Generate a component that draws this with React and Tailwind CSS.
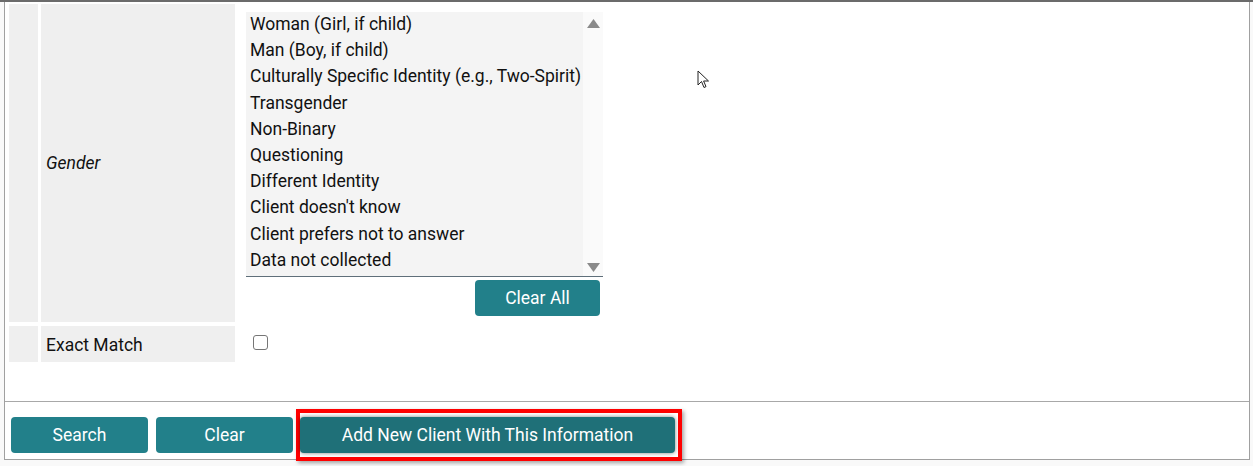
import React from "react";

const genders = [
  "Woman (Girl, if child)",
  "Man (Boy, if child)",
  "Culturally Specific Identity (e.g., Two-Spirit)",
  "Transgender",
  "Non-Binary",
  "Questioning",
  "Different Identity",
  "Client doesn't know",
  "Client prefers not to answer",
  "Data not collected",
];

export default function App() {
  return (
    <div
      className="relative h-[466px] w-[1253px] overflow-hidden bg-[#f9f9f9] text-[17.5px] text-[#111]"
      style={{ fontFamily: "Roboto, 'Liberation Sans', sans-serif" }}
    >
      <div className="h-[2px] bg-[#6b6b6b]" />
      <div className="ml-[4px] mr-[3px] flex h-[458px] flex-col border-x border-b border-[#a0a0a0] bg-white">
        {/* Form rows */}
        <div className="flex h-[399px] shrink-0 flex-col gap-[4px] pl-[4px] pt-[2px]">
          <div className="flex h-[318px] gap-[3px]">
            <div className="w-[29px] bg-[#efefef]" />
            <div className="flex w-[194px] items-center bg-[#efefef] pl-[5px] italic">
              Gender
            </div>
            <div className="flex flex-col pl-[8px] pt-[8px]">
              <div className="relative flex h-[265px] w-[357px] border-b border-[#5f6f7a] bg-[#f4f4f4]">
                <div className="-mt-[1px] flex flex-col pl-[4px] leading-[26.2px]">
                  {genders.map((g) => (
                    <div key={g} className="whitespace-nowrap">
                      {g}
                    </div>
                  ))}
                </div>
                <div className="absolute right-0 top-0 flex h-full w-[20px] flex-col items-center justify-between bg-[#fafafa] pb-[4px] pt-[7px]">
                  <svg width="13" height="9" viewBox="0 0 13 9">
                    <path d="M6.5 0 L13 9 L0 9 Z" fill="#8a8a8a" />
                  </svg>
                  <svg width="13" height="9" viewBox="0 0 13 9">
                    <path d="M0 0 L13 0 L6.5 9 Z" fill="#8a8a8a" />
                  </svg>
                </div>
              </div>
              <div className="mt-[3px] flex justify-end pr-[3px]">
                <button className="h-[36px] w-[125px] rounded-[4px] bg-[#22808a] text-white">
                  Clear All
                </button>
              </div>
            </div>
          </div>
          <div className="flex h-[36px] gap-[3px]">
            <div className="w-[29px] bg-[#efefef]" />
            <div className="flex w-[194px] items-center bg-[#efefef] pl-[5px] pt-[2px]">
              Exact Match
            </div>
            <div className="pl-[15px] pt-[9px]">
              <div className="h-[15px] w-[15px] rounded-[3px] border border-[#767676] bg-white" />
            </div>
          </div>
        </div>
        <div className="h-px shrink-0 bg-[#a8a8a8]" />
        {/* Actions */}
        <div className="flex h-[56px] shrink-0 items-start gap-[8px] pl-[6px] pt-[7px]">
          <button className="mt-[8px] h-[36px] w-[137px] rounded-[4px] bg-[#22808a] text-white">
            Search
          </button>
          <button className="mt-[8px] h-[36px] w-[137px] rounded-[4px] bg-[#22808a] text-white">
            Clear
          </button>
          <div className="-ml-[5px] border-4 border-[#ff0000] pb-[4px] pr-[3px] pt-[4px] shadow-[2px_2px_4px_rgba(0,0,0,0.35)]">
            <button className="h-[36px] w-[375px] rounded-[4px] bg-[#1f7078] text-white shadow-[0_0_4px_rgba(0,0,0,0.5)]">
              Add New Client With This Information
            </button>
          </div>
        </div>
      </div>
      {/* mouse cursor */}
      <svg
        className="absolute left-[697px] top-[70px]"
        width="14"
        height="20"
        viewBox="0 0 14 20"
      >
        <path
          d="M1 1 L1 15 L4.5 11.5 L7 17.5 L9 16.6 L6.6 11 L11.5 11 Z"
          fill="white"
          stroke="#222"
          strokeWidth="1"
          strokeLinejoin="round"
        />
      </svg>
    </div>
  );
}
